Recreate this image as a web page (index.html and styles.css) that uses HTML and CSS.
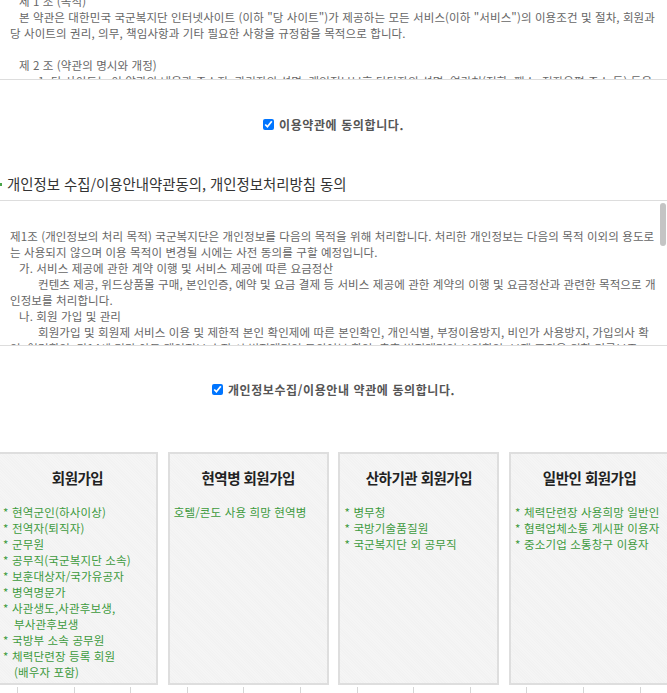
FILE: index.html
```html
<!DOCTYPE html>
<html lang="ko">
<head>
<meta charset="utf-8">
<title>회원가입 약관동의</title>
<link rel="stylesheet" href="styles.css">
</head>
<body>
<div class="terms-box">
  <div class="terms-text">
    <div class="ln ind1">제 1 조 (목적)</div>
    <div class="ln ind1">본 약관은 대한민국 국군복지단 인터넷사이트 (이하 "당 사이트")가 제공하는 모든 서비스(이하 "서비스")의 이용조건 및 절차, 회원과</div>
    <div class="ln">당 사이트의 권리, 의무, 책임사항과 기타 필요한 사항을 규정함을 목적으로 합니다.</div>
    <div class="ln">&nbsp;</div>
    <div class="ln ind1">제 2 조 (약관의 명시와 개정)</div>
    <div class="ln ind2">1. 당 사이트는 이 약관의 내용과 주소지, 관리자의 성명, 개인정보보호 담당자의 성명, 연락처(전화, 팩스, 전자우편 주소 등) 등을</div>
  </div>
</div>

<label class="agree agree-first">
  <input type="checkbox" checked>
  <span>이용약관에 동의합니다.</span>
</label>

<h2 class="section-title"><span class="dot"></span>개인정보 수집/이용안내약관동의, 개인정보처리방침 동의</h2>

<div class="privacy-box">
  <div class="privacy-text">
    <div class="ln">제1조 (개인정보의 처리 목적) 국군복지단은 개인정보를 다음의 목적을 위해 처리합니다. 처리한 개인정보는 다음의 목적 이외의 용도로</div>
    <div class="ln">는 사용되지 않으며 이용 목적이 변경될 시에는 사전 동의를 구할 예정입니다.</div>
    <div class="ln ind1">가. 서비스 제공에 관한 계약 이행 및 서비스 제공에 따른 요금정산</div>
    <div class="ln ind2">컨텐츠 제공, 위드상품몰 구매, 본인인증, 예약 및 요금 결제 등 서비스 제공에 관한 계약의 이행 및 요금정산과 관련한 목적으로 개</div>
    <div class="ln">인정보를 처리합니다.</div>
    <div class="ln ind1">나. 회원 가입 및 관리</div>
    <div class="ln ind2">회원가입 및 회원제 서비스 이용 및 제한적 본인 확인제에 따른 본인확인, 개인식별, 부정이용방지, 비인가 사용방지, 가입의사 확</div>
    <div class="ln">인, 연령확인, 만14세 미만 아동 개인정보 수집 시 법정대리인 동의여부 확인, 추후 법정대리인 본인확인, 분쟁 조정을 위한 기록보존</div>
  </div>
  <div class="scrollbar"><div class="thumb"></div></div>
</div>

<label class="agree agree-second">
  <input type="checkbox" checked>
  <span>개인정보수집/이용안내 약관에 동의합니다.</span>
</label>

<div class="join-list">
  <div class="join-box">
    <h3 class="join-title">회원가입</h3>
    <ul class="join-items">
      <li><span class="star">*</span>현역군인(하사이상)</li>
      <li><span class="star">*</span>전역자(퇴직자)</li>
      <li><span class="star">*</span>군무원</li>
      <li><span class="star">*</span>공무직(국군복지단 소속)</li>
      <li><span class="star">*</span>보훈대상자/국가유공자</li>
      <li><span class="star">*</span>병역명문가</li>
      <li><span class="star">*</span>사관생도,사관후보생,<br>부사관후보생</li>
      <li><span class="star">*</span>국방부 소속 공무원</li>
      <li><span class="star">*</span>체력단련장 등록 회원<br>(배우자 포함)</li>
    </ul>
  </div>
  <div class="join-box">
    <h3 class="join-title">현역병 회원가입</h3>
    <ul class="join-items plain">
      <li>호텔/콘도 사용 희망 현역병</li>
    </ul>
  </div>
  <div class="join-box">
    <h3 class="join-title">산하기관 회원가입</h3>
    <ul class="join-items">
      <li><span class="star">*</span>병무청</li>
      <li><span class="star">*</span>국방기술품질원</li>
      <li><span class="star">*</span>국군복지단 외 공무직</li>
    </ul>
  </div>
  <div class="join-box">
    <h3 class="join-title">일반인 회원가입</h3>
    <ul class="join-items">
      <li><span class="star">*</span>체력단련장 사용희망 일반인</li>
      <li><span class="star">*</span>협력업체소통 게시판 이용자</li>
      <li><span class="star">*</span>중소기업 소통창구 이용자</li>
    </ul>
  </div>
</div>

<div class="ticks">
  <span></span><span></span><span></span><span></span><span></span><span></span>
  <span></span><span></span><span></span><span></span><span></span><span></span>
</div>
</body>
</html>
```

FILE: styles.css
```css
html, body {
  margin: 0;
  padding: 0;
  background: #fff;
}

body {
  font-family: "Noto Sans CJK KR", "Noto Sans", sans-serif;
  color: #666;
  overflow: hidden;
}

.ln {
  white-space: nowrap;
  font-size: 11.5px;
  letter-spacing: 0.1px;
  line-height: 16px;
  height: 16px;
}

.ind1 { padding-left: 9px; }
.ind2 { padding-left: 28px; }

/* top terms box (scrolled) */
.terms-box {
  height: 79px;
  overflow: hidden;
  border-bottom: 1px solid #dddddd;
  padding: 0 2px 0 10px;
}

.terms-text {
  margin-top: -7px;
}

/* agree rows */
.agree {
  display: flex;
  justify-content: center;
  align-items: center;
  height: 24px;
  font-size: 12px;
  font-weight: 700;
  letter-spacing: 0.6px;
  color: #555;
}

.agree input {
  width: 11px;
  height: 11px;
  margin: 0 5px 0 0;
  accent-color: #0075ff;
}

.agree-first { margin-top: 32px; }
.agree-second { margin-top: 31px; }

/* section title */
.section-title {
  margin: 38px 0 0;
  padding: 0 0 6px;
  font-size: 14.4px;
  font-weight: 400;
  line-height: 20px;
  color: #333;
  border-bottom: 1px solid #dddddd;
  display: flex;
  align-items: center;
}

.dot {
  display: inline-block;
  width: 3px;
  height: 3px;
  background: #4aa44a;
  margin-left: -1px;
  margin-right: 5px;
}

/* privacy box */
.privacy-box {
  height: 144px;
  border-bottom: 1px solid #dddddd;
  display: flex;
  overflow: hidden;
}

.privacy-text {
  flex: 1;
  padding: 27px 0 0 10px;
  overflow: hidden;
}

.scrollbar {
  width: 7px;
  flex: none;
  padding-top: 2px;
}

.thumb {
  width: 6px;
  height: 43px;
  border-radius: 3px;
  background: #c4c4c4;
}

/* join boxes */
.join-list {
  display: flex;
  gap: 9.7px;
  margin: 51px 0 0 -3px;
}

.join-box {
  flex: none;
  width: 161px;
  height: 233px;
  box-sizing: border-box;
  border: 2px solid #dedede;
  background-color: #f4f4f4;
  background-image: repeating-linear-gradient(45deg, rgba(0,0,0,0.006) 0 1px, rgba(255,255,255,0.12) 1px 2px);
  padding: 14px 4px 0;
}

.join-title {
  margin: 0;
  text-align: center;
  font-size: 14.5px;
  line-height: 20px;
  font-weight: 700;
  letter-spacing: -0.5px;
  color: #222;
}

.join-items {
  list-style: none;
  margin: 16px 0 0;
  padding: 0;
}

.join-items li {
  font-size: 11.5px;
  letter-spacing: 0.15px;
  line-height: 16px;
  color: #3d9a3d;
  padding-left: 11px;
  text-indent: -11px;
  white-space: nowrap;
}

.join-items.plain li {
  padding-left: 0;
  text-indent: 0;
}

.star {
  display: inline-block;
  width: 9px;
  text-indent: 0;
  line-height: 16px;
  vertical-align: top;
}

/* ticks under boxes */
.ticks {
  display: flex;
  padding-left: 17px;
  margin-top: 2px;
  height: 10px;
}

.ticks span {
  flex: none;
  width: 56.6px;
  height: 10px;
  box-sizing: border-box;
  border-left: 1px solid #d6d6d6;
}
```
